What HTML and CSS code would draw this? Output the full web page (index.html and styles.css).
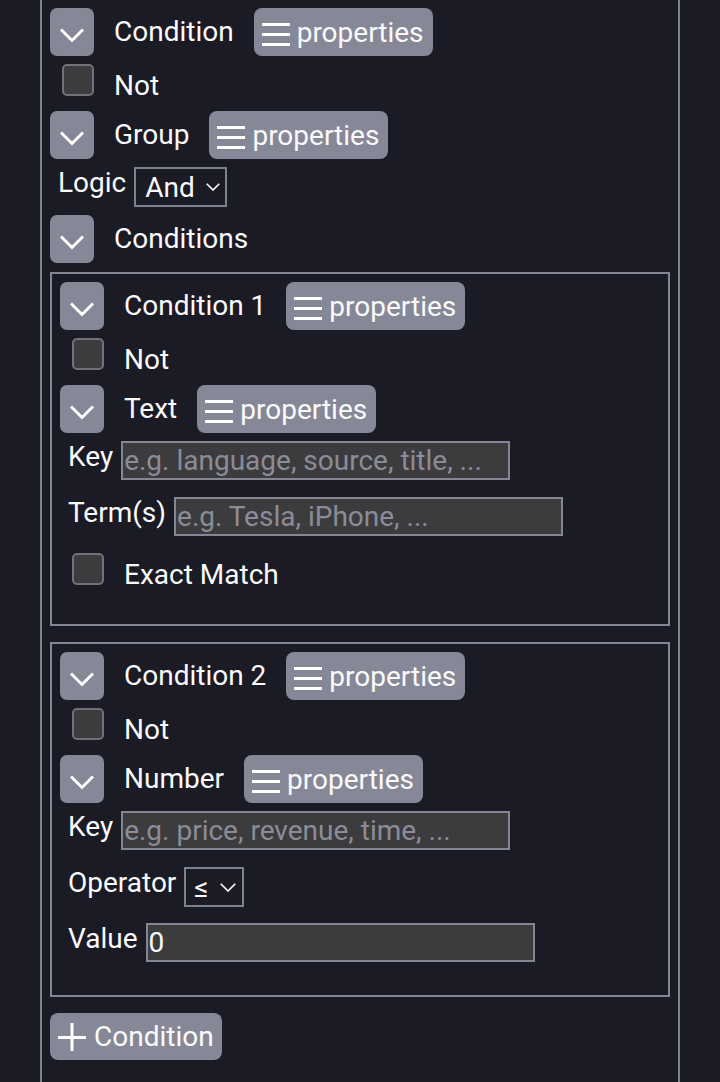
FILE: index.html
```html
<!DOCTYPE html>
<html lang="en">
<head>
<meta charset="utf-8">
<title>Condition editor</title>
<link rel="stylesheet" href="styles.css">
</head>
<body>
<div class="page">
  <div class="outer">
    <div class="hdr">
      <span class="chev"><svg width="44" height="48" viewBox="0 0 44 48"><polyline points="11,21.5 22,32.5 33,21.5" fill="none" stroke="#fff" stroke-width="3"/></svg></span>
      <span class="title">Condition</span>
      <span class="props"><svg class="menu" width="28" height="48" viewBox="0 0 28 48"><path d="M0 16.5H28M0 26.5H28M0 36.5H28" stroke="#fff" stroke-width="3"/></svg>properties</span>
    </div>
    <div class="chk-row"><span class="chk"></span><span class="chk-label">Not</span></div>
    <div class="hdr">
      <span class="chev"><svg width="44" height="48" viewBox="0 0 44 48"><polyline points="11,21.5 22,32.5 33,21.5" fill="none" stroke="#fff" stroke-width="3"/></svg></span>
      <span class="title">Group</span>
      <span class="props"><svg class="menu" width="28" height="48" viewBox="0 0 28 48"><path d="M0 16.5H28M0 26.5H28M0 36.5H28" stroke="#fff" stroke-width="3"/></svg>properties</span>
    </div>
    <div class="field">
      <span class="lbl">Logic</span>
      <span class="select">And<svg class="dd" width="14" height="8" viewBox="0 0 14 8"><polyline points="0.7,0.7 7,7 13.3,0.7" fill="none" stroke="#fff" stroke-width="1.6"/></svg></span>
    </div>
    <div class="hdr">
      <span class="chev"><svg width="44" height="48" viewBox="0 0 44 48"><polyline points="11,21.5 22,32.5 33,21.5" fill="none" stroke="#fff" stroke-width="3"/></svg></span>
      <span class="title">Conditions</span>
    </div>

    <div class="box">
      <div class="hdr">
        <span class="chev"><svg width="44" height="48" viewBox="0 0 44 48"><polyline points="11,21.5 22,32.5 33,21.5" fill="none" stroke="#fff" stroke-width="3"/></svg></span>
        <span class="title">Condition 1</span>
        <span class="props"><svg class="menu" width="28" height="48" viewBox="0 0 28 48"><path d="M0 16.5H28M0 26.5H28M0 36.5H28" stroke="#fff" stroke-width="3"/></svg>properties</span>
      </div>
      <div class="chk-row"><span class="chk"></span><span class="chk-label">Not</span></div>
      <div class="hdr">
        <span class="chev"><svg width="44" height="48" viewBox="0 0 44 48"><polyline points="11,21.5 22,32.5 33,21.5" fill="none" stroke="#fff" stroke-width="3"/></svg></span>
        <span class="title">Text</span>
        <span class="props"><svg class="menu" width="28" height="48" viewBox="0 0 28 48"><path d="M0 16.5H28M0 26.5H28M0 36.5H28" stroke="#fff" stroke-width="3"/></svg>properties</span>
      </div>
      <div class="field">
        <span class="lbl">Key</span>
        <input class="inp" type="text" placeholder="e.g. language, source, title, ...">
      </div>
      <div class="field">
        <span class="lbl">Term(s)</span>
        <input class="inp" type="text" placeholder="e.g. Tesla, iPhone, ...">
      </div>
      <div class="chk-row"><span class="chk"></span><span class="chk-label">Exact Match</span></div>
    </div>

    <div class="box">
      <div class="hdr">
        <span class="chev"><svg width="44" height="48" viewBox="0 0 44 48"><polyline points="11,21.5 22,32.5 33,21.5" fill="none" stroke="#fff" stroke-width="3"/></svg></span>
        <span class="title">Condition 2</span>
        <span class="props"><svg class="menu" width="28" height="48" viewBox="0 0 28 48"><path d="M0 16.5H28M0 26.5H28M0 36.5H28" stroke="#fff" stroke-width="3"/></svg>properties</span>
      </div>
      <div class="chk-row"><span class="chk"></span><span class="chk-label">Not</span></div>
      <div class="hdr">
        <span class="chev"><svg width="44" height="48" viewBox="0 0 44 48"><polyline points="11,21.5 22,32.5 33,21.5" fill="none" stroke="#fff" stroke-width="3"/></svg></span>
        <span class="title">Number</span>
        <span class="props"><svg class="menu" width="28" height="48" viewBox="0 0 28 48"><path d="M0 16.5H28M0 26.5H28M0 36.5H28" stroke="#fff" stroke-width="3"/></svg>properties</span>
      </div>
      <div class="field">
        <span class="lbl">Key</span>
        <input class="inp" type="text" placeholder="e.g. price, revenue, time, ...">
      </div>
      <div class="field">
        <span class="lbl">Operator</span>
        <span class="select op">≤<svg class="dd" width="16" height="9" viewBox="0 0 16 9"><polyline points="0.7,0.7 8,8 15.3,0.7" fill="none" stroke="#fff" stroke-width="1.6"/></svg></span>
      </div>
      <div class="field">
        <span class="lbl">Value</span>
        <input class="inp val" type="text" value="0">
      </div>
    </div>

    <div class="add"><svg class="plus" width="28" height="28" viewBox="0 0 28 28"><path d="M0 14.5H28M14 0V28" stroke="#fff" stroke-width="3"/></svg>Condition</div>
  </div>
</div>
</body>
</html>
```

FILE: styles.css
```css
html, body {
  margin: 0;
  padding: 0;
  background: #1b1b26;
  height: 100%;
  overflow: hidden;
}

body {
  font-family: Roboto, "Liberation Sans", sans-serif;
  font-size: 28px;
  color: #fafafa;
}

.page {
  padding-left: 40px;
}

.outer {
  width: 640px;
  box-sizing: border-box;
  border-left: 2px solid #7f808e;
  border-right: 2px solid #7f808e;
  padding: 8px 8px 60px 8px;
}

.hdr {
  display: flex;
  align-items: center;
  height: 48px;
}

.chev {
  display: block;
  width: 44px;
  height: 48px;
  background: #878897;
  border-radius: 7px;
  flex: none;
}

.chev svg {
  display: block;
}

.title {
  margin: 0 20px;
  padding-bottom: 1px;
  white-space: nowrap;
}

.props {
  display: flex;
  align-items: center;
  height: 48px;
  padding: 0 9px 0 8px;
  background: #878897;
  border-radius: 8px;
  white-space: nowrap;
}

.props .menu {
  display: block;
  margin-right: 7px;
}

.chk-row {
  display: flex;
  align-items: flex-start;
  height: 55px;
}

.chk {
  display: block;
  box-sizing: border-box;
  width: 32px;
  height: 32px;
  margin: 8px 0 0 12px;
  background: #3c3c3e;
  border: 2px solid #717179;
  border-radius: 5px;
  flex: none;
}

.chk-label {
  margin: 14px 0 0 20px;
  line-height: 32px;
  white-space: nowrap;
}

.field {
  display: flex;
  align-items: flex-start;
  height: 56px;
  box-sizing: border-box;
  padding: 8px 0 0 8px;
}

.lbl {
  margin-top: -1px;
  margin-right: 8px;
  white-space: nowrap;
}

.select {
  display: flex;
  align-items: center;
  box-sizing: border-box;
  height: 40px;
  padding: 0 5px 0 9px;
  border: 2px solid #7f808e;
  white-space: nowrap;
}

.select .dd {
  display: block;
  margin-left: 11px;
}

.select.op {
  padding: 0 6px 0 8px;
}

.select.op .dd {
  margin-left: 11px;
}

.inp {
  display: block;
  box-sizing: border-box;
  width: 389px;
  height: 39px;
  margin: 0;
  padding: 0 1px;
  background: #3c3c3e;
  border: 2px solid #858694;
  border-radius: 0;
  font-family: Roboto, "Liberation Sans", sans-serif;
  font-size: 28px;
  color: #fafafa;
  outline: none;
}

.inp::placeholder {
  color: #8b8c98;
  opacity: 1;
}

.box {
  border: 2px solid #858694;
  margin: 9px 0 16px 0;
  padding: 8px 8px 24px 8px;
}

.add {
  display: inline-flex;
  align-items: center;
  height: 47px;
  padding: 0 8px 0 8px;
  background: #878897;
  border-radius: 8px;
  white-space: nowrap;
}

.add .plus {
  display: block;
  margin-right: 8px;
}
```
